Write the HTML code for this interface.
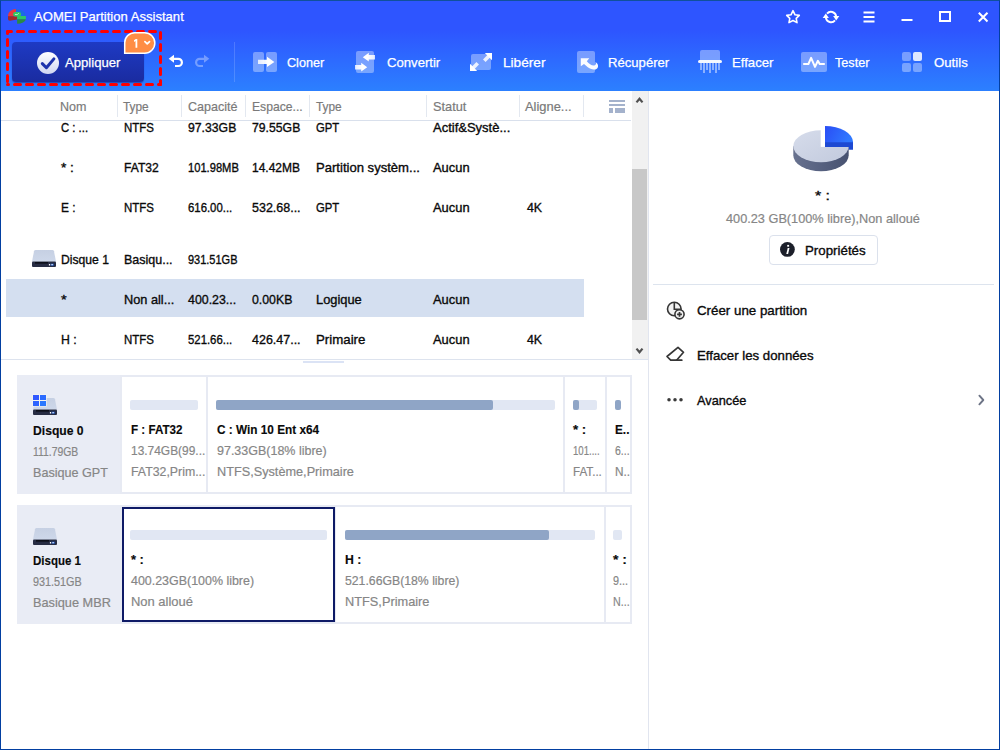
<!DOCTYPE html>
<html><head><meta charset="utf-8"><title>AOMEI Partition Assistant</title>
<style>
html,body{margin:0;padding:0;background:#fff;}
body{width:1000px;height:750px;overflow:hidden;font-family:"Liberation Sans",sans-serif;}
#win{position:relative;width:1000px;height:750px;overflow:hidden;background:#fff;}
.t{position:absolute;white-space:nowrap;line-height:16px;transform-origin:0 50%;font-family:"Liberation Sans",sans-serif;}
.a{position:absolute;}
#hdr{left:0;top:0;width:1000px;height:91px;background:linear-gradient(180deg,#2e55ff 0,#2e55ff 30px,#2c80ff 91px);}
#frame{left:0;top:0;width:998px;height:748px;border:1px solid #023fa1;border-top-color:#10509c;pointer-events:none;}
#apply{left:12px;top:42px;width:132px;height:40px;border-radius:4px;background:linear-gradient(180deg,#1e3ac4 0%,#1c33b2 50%,#1a2ba0 100%);box-shadow:0 1px 1px rgba(16,30,120,0.5);}
#dash{left:0;top:0;}
.vsep{width:1px;background:#e3e8f0;top:95px;height:22px;}
.pbox{box-sizing:border-box;border:2px solid #e7eaf3;background:#fff;}
.bar{height:10px;border-radius:2px;background:#e1e7f3;}
.fill{height:10px;border-radius:2px;background:#8fa5c6;}

</style></head>
<body>
<div id="win">
<div id="hdr" class="a"></div>
<!-- apply button -->
<div id="apply" class="a"></div>

<!-- table header -->
<div class="a vsep" style="left:117px"></div>
<div class="a vsep" style="left:181px"></div>
<div class="a vsep" style="left:245px"></div>
<div class="a vsep" style="left:309px"></div>
<div class="a vsep" style="left:426px"></div>
<div class="a vsep" style="left:519px"></div>
<div class="a vsep" style="left:583px"></div>
<div class="a" style="left:1px;top:120px;width:630px;height:1px;background:#d9e0ec"></div>
<!-- selected row -->
<div class="a" style="left:6px;top:279px;width:578px;height:38px;background:#d4dff0"></div>
<!-- scrollbar -->
<div class="a" style="left:632px;top:91px;width:16px;height:268px;background:#f1f1f1"></div>
<div class="a" style="left:632px;top:169px;width:15px;height:151px;background:#c8c8c8"></div>
<!-- dividers -->
<div class="a" style="left:1px;top:359px;width:648px;height:1px;background:#dde3ee"></div>
<div class="a" style="left:303px;top:361px;width:41px;height:2px;background:#dbe3f5"></div>
<div class="a" style="left:648px;top:91px;width:1px;height:658px;background:#e1e5ef"></div>
<div class="a" style="left:653px;top:284px;width:341px;height:1px;background:#dde4ee"></div>

<!-- disk 0 panel -->
<div class="a" style="left:17px;top:375px;width:614px;height:119px;background:#e9ecf5"></div>
<div class="a pbox" style="left:120px;top:375px;width:88px;height:119px"></div>
<div class="a pbox" style="left:206px;top:375px;width:359px;height:119px"></div>
<div class="a pbox" style="left:563px;top:375px;width:44px;height:119px"></div>
<div class="a pbox" style="left:605px;top:375px;width:27px;height:119px"></div>
<div class="a bar" style="left:130px;top:400px;width:68px"></div>
<div class="a bar" style="left:216px;top:400px;width:339px"></div>
<div class="a fill" style="left:216px;top:400px;width:277px"></div>
<div class="a bar" style="left:573px;top:400px;width:24px"></div>
<div class="a fill" style="left:573px;top:400px;width:6px"></div>
<div class="a fill" style="left:615px;top:400px;width:6px"></div>

<!-- disk 1 panel -->
<div class="a" style="left:17px;top:505px;width:614px;height:119px;background:#e9ecf5"></div>
<div class="a pbox" style="left:120px;top:505px;width:216px;height:119px"></div>
<div class="a pbox" style="left:334px;top:505px;width:272px;height:119px"></div>
<div class="a pbox" style="left:604px;top:505px;width:28px;height:119px"></div>
<div class="a" style="left:122px;top:507px;width:213px;height:115px;box-sizing:border-box;border:2px solid #0e1a66;background:#fff"></div>
<div class="a bar" style="left:130px;top:530px;width:197px"></div>
<div class="a bar" style="left:345px;top:530px;width:250px"></div>
<div class="a fill" style="left:345px;top:530px;width:204px"></div>
<div class="a bar" style="left:613px;top:530px;width:9px"></div>

<!-- properties button -->
<div class="a" style="left:769px;top:235px;width:109px;height:30px;box-sizing:border-box;border:1px solid #dbe1ec;border-radius:4px;background:#fff"></div>

<svg class="a" id="dash" width="1000" height="750" viewBox="0 0 1000 750">
  <defs>
    <linearGradient id="ck" x1="0" y1="0" x2="0" y2="1"><stop offset="0" stop-color="#ffffff"/><stop offset="1" stop-color="#cfd6f2"/></linearGradient>
    <linearGradient id="ar" x1="0" y1="0" x2="1" y2="0"><stop offset="0" stop-color="#fff" stop-opacity="0.800"/><stop offset="0.600" stop-color="#fff" stop-opacity="1"/></linearGradient>
    <linearGradient id="al" x1="1" y1="0" x2="0" y2="0"><stop offset="0" stop-color="#fff" stop-opacity="0.800"/><stop offset="0.600" stop-color="#fff" stop-opacity="1"/></linearGradient>
    <linearGradient id="dk" x1="0" y1="0" x2="0" y2="1"><stop offset="0" stop-color="#c6d0e3"/><stop offset="1" stop-color="#ced8ea"/></linearGradient>
  </defs>
  <!-- red dashed box -->
  <g fill="none" stroke="#ff0000" stroke-width="3" stroke-dasharray="6 6" stroke-linecap="round">
    <path d="M7.500 31.500 H160.500" stroke-dashoffset="2"/>
    <path d="M160.500 31.500 V84.500" stroke-dashoffset="11"/>
    <path d="M7.500 84.500 H160.500" stroke-dashoffset="5"/>
    <path d="M7.500 31.500 V84.500" stroke-dashoffset="4"/>
  </g>
  <!-- check icon -->
  <circle cx="48" cy="63" r="11" fill="url(#ck)"/>
  <path d="M42.300 63.600 L46.400 67.700 L53.900 58.900" fill="none" stroke="#1d33ac" stroke-width="3" stroke-linecap="round" stroke-linejoin="round"/>
  <!-- badge -->
  <path d="M124.700 53.200 V42.700 a10 10 0 0 1 10 -10 H144.600 a10.250 10.250 0 0 1 0 20.500 Z" fill="#ff8d45" stroke="#fff" stroke-width="1.500"/>
  <path d="M137.300 38.900 V47.800 H135.500 V41.100 L134 42 V40.300 L135.800 38.900 Z" fill="#fff"/>
  <path d="M144.900 41.600 L147.200 43.900 L149.500 41.600" fill="none" stroke="#fff" stroke-width="1.700" stroke-linecap="round" stroke-linejoin="round"/>
  <!-- undo -->
  <path d="M173.600 58.800 H178.300 a3.600 3.600 0 0 1 0 7.200 H175" fill="none" stroke="#fff" stroke-width="2.200"/>
  <path d="M168.700 58.800 L174 54.800 V62.800 Z" fill="#fff"/>
  <!-- redo -->
  <g opacity="0.340">
  <path d="M204.400 58.800 H199.700 a3.600 3.600 0 0 0 0 7.200 H203" fill="none" stroke="#fff" stroke-width="2.200"/>
  <path d="M209.300 58.800 L204 54.800 V62.800 Z" fill="#fff"/>
  </g>
  <!-- toolbar separator -->
  <rect x="234" y="42" width="1" height="40" fill="#fff" opacity="0.16"/>

  <!-- Cloner -->
  <rect x="253" y="52" width="11" height="20" rx="2" fill="#fff" opacity="0.36"/>
  <rect x="266" y="52" width="11" height="20" rx="2" fill="#fff" opacity="0.36"/>
  <path d="M258 59.700 H267 V56.700 L274.400 61.900 L267 67.100 V64.100 H258 Z" fill="url(#ar)"/>
  <!-- Convertir -->
  <rect x="356" y="51" width="18" height="22" rx="2" fill="#fff" opacity="0.36"/>
  <path d="M375 55 H368.800 V52.800 L362.800 57.200 L368.800 61.600 V59.400 H375 Z" fill="url(#al)"/>
  <path d="M355 65 H361.200 V62.800 L367.200 67.200 L361.200 71.600 V69.400 H355 Z" fill="url(#ar)"/>
  <!-- Liberer -->
  <rect x="471" y="54" width="20" height="16" rx="2" fill="#fff" opacity="0.36"/>
  <path d="M487.900 54.500 L490.500 57.100 L485.600 62 L483 59.400 Z" fill="#fff" opacity="0.860"/><path d="M484.800 53 H492 V60.200 Z" fill="#fff"/>
  <path d="M471.500 66.900 L474.100 69.500 L479 64.600 L476.400 62 Z" fill="#fff" opacity="0.860"/><path d="M470 63.800 V71 H477.200 Z" fill="#fff"/>
  <!-- Recuperer -->
  <rect x="577" y="51" width="18" height="22" rx="2" fill="#fff" opacity="0.36"/>
  <path d="M580.800 58.200 H589.300 L586.800 61.200 C589 63.600 591.500 65.700 594 65.500 C595.600 65.300 596.100 63.600 595.500 61.900 C598.200 63.500 598.900 66.500 597.100 68.400 C594.600 70.600 590.500 69.400 587.500 67.100 C586 65.900 584.800 64.900 584 64.100 L580.800 66.300 Z" fill="#fff" opacity="0.97"/>
  <!-- Effacer -->
  <path d="M700 60 V52 a2 2 0 0 1 2 -2 H718 a2 2 0 0 1 2 2 V60 Z" fill="#fff" opacity="0.36"/>
  <rect x="698" y="60" width="24" height="3" rx="1.5" fill="#fff" opacity="0.950"/>
  <g fill="#fff" opacity="0.45">
    <rect x="700" y="63" width="2" height="7"/>
    <rect x="703" y="63" width="2" height="10"/>
    <rect x="706" y="63" width="2" height="7"/>
    <rect x="709" y="63" width="2" height="10"/>
    <rect x="712" y="63" width="2" height="7"/>
    <rect x="715" y="63" width="2" height="10"/>
    <rect x="718" y="63" width="2" height="7"/>
  </g>
  <!-- Tester -->
  <rect x="801" y="52" width="26" height="20" rx="2" fill="#fff" opacity="0.36"/>
  <path d="M803.200 64 H808.400 L811.100 57.800 L815 66.900 L817.900 60.800 L819.700 64 H824.800" fill="none" stroke="#fff" stroke-width="2" stroke-linejoin="round" stroke-linecap="butt"/>
  <!-- Outils -->
  <rect x="902" y="52" width="9" height="9" rx="2" fill="#fff" opacity="0.36"/>
  <rect x="913" y="52" width="9" height="9" rx="2" fill="#fff" opacity="0.85"/>
  <rect x="902" y="63" width="9" height="9" rx="2" fill="#fff" opacity="0.36"/>
  <rect x="913" y="63" width="9" height="9" rx="2" fill="#fff" opacity="0.36"/>

  <!-- window controls -->
  <g fill="none" stroke="#fff" stroke-width="1.8" stroke-linejoin="round" stroke-linecap="round">
    <path d="M793 10.700 L795 14.800 L799.300 15.400 L796.200 18.400 L797 22.600 L793 20.500 L789 22.600 L789.800 18.400 L786.700 15.400 L791 14.800 Z" stroke-width="1.600"/>
    <path d="M863.500 12.500 H874.5 M863.500 17 H874.5 M863.500 21.500 H874.500" stroke-linecap="butt" stroke-width="2"/>
    <path d="M901.500 20 H912.500" stroke-linecap="butt" stroke-width="2"/>
    <rect x="940" y="12" width="10" height="9" stroke-width="2" stroke-linejoin="miter"/>
    <path d="M978.800 12.800 L987.500 21.500 M987.500 12.800 L978.800 21.500" stroke-width="2" stroke-linecap="butt"/>
  </g>
  <!-- refresh -->
  <g fill="none" stroke="#fff" stroke-width="1.900">
    <path d="M827 13.660 A5.200 5.200 0 0 1 836.100 16.100"/>
    <path d="M835 20.340 A5.200 5.200 0 0 1 825.900 17.900"/>
  </g>
  <path d="M833.100 16 H839.300 L836.200 20.400 Z" fill="#fff"/>
  <path d="M822.700 18 H828.900 L825.800 13.600 Z" fill="#fff"/>

  <!-- app icon -->
  <g>
    <path d="M8 16.300 V15.500 A8.500 6.600 0 0 1 16 9 V16.300 Z" fill="#e8383f"/>
    <path d="M16 9 A9.600 6.800 0 0 1 25.900 15.800 H16 Z" fill="#1a6ce2"/>
    <path d="M8 16.200 H17.100 V19.400 L10 20.800 Q8 20.800 8 19 Z" fill="#a52a27"/>
    <path d="M17.100 16 H25.900 V19.400 H17.100 Z" fill="#2ec866"/>
    <path d="M17.100 19.300 H25.900 A9 5 0 0 1 17.100 23.800 Z" fill="#2a8a45"/>
    <rect x="13.100" y="12" width="7.900" height="4.400" rx="2" fill="#2ecc62"/>
    <path d="M15.300 14.500 L17.300 14.600 L18.500 13.500" fill="none" stroke="#d9f5e2" stroke-width="0.800" stroke-linecap="round"/>
  </g>

  <!-- column chooser icon -->
  <g fill="#a4b2cc">
    <rect x="609" y="100" width="16" height="2"/>
    <rect x="609" y="104" width="16" height="2"/>
    <rect x="609" y="108" width="4" height="5"/>
    <rect x="615" y="108" width="10" height="5"/>
  </g>
  <!-- scrollbar arrows -->
  <path d="M636.500 102.400 L639.500 98.800 L642.500 102.400" fill="none" stroke="#505050" stroke-width="2.200"/>
  <path d="M636.500 348.600 L639.500 352.200 L642.500 348.600" fill="none" stroke="#505050" stroke-width="2.200"/>

  <!-- disk icons -->
  <symbol id="hdd" viewBox="0 0 24 17" overflow="visible">
    <path d="M3.6 0 H20.4 Q21.7 0 22 1.200 L24 11.800 H0 L2 1.200 Q2.300 0 3.600 0 Z" fill="url(#dk)"/>
    <rect x="0" y="11.400" width="24" height="5.500" rx="1" fill="#272c43"/>
    <rect x="3" y="12.100" width="13" height="1.500" fill="#0b0d16"/>
    <rect x="16.900" y="14" width="1.300" height="1.500" fill="#fff"/>
    <rect x="18.700" y="13.700" width="3" height="2" fill="#1d59c8"/>
    <rect x="19.300" y="14.300" width="1.800" height="0.900" fill="#fff"/>
  </symbol>
  <use href="#hdd" x="32" y="250" width="24" height="17"/>
  <use href="#hdd" x="33" y="398" width="24" height="17"/>
  <rect x="32.400" y="394.200" width="14.200" height="12.300" fill="#f4f4f0"/>
  <rect x="33" y="395" width="6" height="5" fill="#3159ff"/><rect x="40" y="395" width="6" height="5" fill="#2b6bff"/>
  <rect x="33" y="401" width="6" height="5" fill="#2d63ff"/><rect x="40" y="401" width="6" height="5" fill="#2a78ff"/>
  <use href="#hdd" x="33" y="528" width="24" height="17"/>

  <!-- pie -->
  <defs>
    <linearGradient id="ps" x1="0" y1="0" x2="1" y2="0"><stop offset="0" stop-color="#68728f"/><stop offset="0.5" stop-color="#566180"/><stop offset="1" stop-color="#475270"/></linearGradient>
    <linearGradient id="pt" x1="0" y1="0" x2="1" y2="1"><stop offset="0" stop-color="#d6dceb"/><stop offset="1" stop-color="#c2cadd"/></linearGradient>
    <linearGradient id="pb" x1="0" y1="0" x2="1" y2="0.300"><stop offset="0" stop-color="#2a4df5"/><stop offset="1" stop-color="#2f78ff"/></linearGradient>
  </defs>
  <g>
    <path d="M793.300 146 V155.300 A27.700 16 0 0 0 848.700 155.300 V146 Z" fill="url(#ps)"/>
    <ellipse cx="821" cy="146.200" rx="27.700" ry="16" fill="url(#pt)"/>
    <path d="M820.700 127 V146.900 H851 V127 Z" fill="#fff"/>
    <path d="M825 141.500 H853 V149.700 H848.800 V146.900 H825 Z" fill="#1d49d2"/>
    <path d="M825 142.200 V126 A28 16.200 0 0 1 853 142.200 Z" fill="url(#pb)"/>
  </g>

  <!-- properties info icon -->
  <circle cx="787.400" cy="249.400" r="7.400" fill="#1c1f2a"/>
  <path d="M787.700 248 H789.500 L788.100 253.900 H786.300 Z" fill="#fff"/><rect x="787.200" y="244.900" width="1.900" height="1.800" fill="#fff"/>

  <!-- create partition icon -->
  <g fill="none" stroke="#353535" stroke-width="1.600">
    <circle cx="674.300" cy="309" r="6.800" fill="#f2f2f2"/>
    <path d="M674.300 302.200 V309.200 H681.100" />
    <circle cx="679.500" cy="314.300" r="4.600" fill="#f2f2f2"/>
    <path d="M679.500 311.900 V316.700 M677.100 314.300 H681.900" stroke-width="1.700"/>
  </g>
  <!-- eraser icon -->
  <g fill="none" stroke="#353535" stroke-width="1.700" stroke-linejoin="round" stroke-linecap="round">
    <path d="M678 347.400 L683.500 352.300 L676.600 360.200 H670.700 L667 356.500 Z"/>
    <path d="M676.600 360.200 H681.800"/>
  </g>
  <!-- dots -->
  <circle cx="669" cy="399.800" r="1.750" fill="#3a3a3a"/><circle cx="675" cy="399.800" r="1.750" fill="#3a3a3a"/><circle cx="681" cy="399.800" r="1.750" fill="#3a3a3a"/>
  <!-- chevron -->
  <path d="M979.400 395.700 L983.300 400 L979.400 404.300" fill="none" stroke="#6d7486" stroke-width="1.900" stroke-linecap="round" stroke-linejoin="round"/>
</svg>
<div id="frame" class="a"></div>

<span class="t" style="left:33.60px;top:9px;color:#fff;font-size:13.5px;font-weight:400;-webkit-text-stroke:0.25px;transform:scaleX(0.9690);">AOMEI Partition Assistant</span>
<span class="t" style="left:64.50px;top:55px;color:#fff;font-size:13px;font-weight:400;-webkit-text-stroke:0.25px;transform:scaleX(1.0091);">Appliquer</span>
<span class="t" style="left:286.60px;top:55px;color:#fff;font-size:13px;font-weight:400;-webkit-text-stroke:0.25px;transform:scaleX(0.9718);">Cloner</span>
<span class="t" style="left:386.50px;top:55px;color:#fff;font-size:13px;font-weight:400;-webkit-text-stroke:0.25px;transform:scaleX(1.0094);">Convertir</span>
<span class="t" style="left:502.50px;top:55px;color:#fff;font-size:13px;font-weight:400;-webkit-text-stroke:0.25px;transform:scaleX(1.0488);">Libérer</span>
<span class="t" style="left:608.00px;top:55px;color:#fff;font-size:13px;font-weight:400;-webkit-text-stroke:0.25px;transform:scaleX(1.0082);">Récupérer</span>
<span class="t" style="left:731.50px;top:55px;color:#fff;font-size:13px;font-weight:400;-webkit-text-stroke:0.25px;transform:scaleX(1.0122);">Effacer</span>
<span class="t" style="left:835.00px;top:55px;color:#fff;font-size:13px;font-weight:400;-webkit-text-stroke:0.25px;transform:scaleX(0.9722);">Tester</span>
<span class="t" style="left:933.50px;top:55px;color:#fff;font-size:13px;font-weight:400;-webkit-text-stroke:0.25px;transform:scaleX(1.0152);">Outils</span>
<span class="t" style="left:60.40px;top:99px;color:#7a7a7a;font-size:13px;font-weight:400;-webkit-text-stroke:0.2px;transform:scaleX(0.9630);">Nom</span>
<span class="t" style="left:122.50px;top:99px;color:#7a7a7a;font-size:13px;font-weight:400;-webkit-text-stroke:0.2px;transform:scaleX(0.9107);">Type</span>
<span class="t" style="left:187.50px;top:99px;color:#7a7a7a;font-size:13px;font-weight:400;-webkit-text-stroke:0.2px;transform:scaleX(0.9627);">Capacité</span>
<span class="t" style="left:251.50px;top:99px;color:#7a7a7a;font-size:13px;font-weight:400;-webkit-text-stroke:0.2px;transform:scaleX(0.9352);">Espace...</span>
<span class="t" style="left:316.00px;top:99px;color:#7a7a7a;font-size:13px;font-weight:400;-webkit-text-stroke:0.2px;transform:scaleX(0.9107);">Type</span>
<span class="t" style="left:432.60px;top:99px;color:#7a7a7a;font-size:13px;font-weight:400;-webkit-text-stroke:0.2px;transform:scaleX(0.9824);">Statut</span>
<span class="t" style="left:525.40px;top:99px;color:#7a7a7a;font-size:13px;font-weight:400;-webkit-text-stroke:0.2px;transform:scaleX(0.9913);">Aligne...</span>
<span class="t" style="left:61.40px;top:120px;color:#0a0a0a;font-size:13px;font-weight:400;-webkit-text-stroke:0.35px;transform:scaleX(0.8710);">C : ...</span>
<span class="t" style="left:124.00px;top:120px;color:#0a0a0a;font-size:13px;font-weight:400;-webkit-text-stroke:0.35px;transform:scaleX(0.8824);">NTFS</span>
<span class="t" style="left:188.00px;top:120px;color:#0a0a0a;font-size:13px;font-weight:400;-webkit-text-stroke:0.35px;transform:scaleX(0.9412);">97.33GB</span>
<span class="t" style="left:252.00px;top:120px;color:#0a0a0a;font-size:13px;font-weight:400;-webkit-text-stroke:0.35px;transform:scaleX(0.9412);">79.55GB</span>
<span class="t" style="left:316.00px;top:120px;color:#0a0a0a;font-size:13px;font-weight:400;-webkit-text-stroke:0.35px;transform:scaleX(0.8667);">GPT</span>
<span class="t" style="left:433.00px;top:120px;color:#0a0a0a;font-size:13px;font-weight:400;-webkit-text-stroke:0.35px;transform:scaleX(1.0000);">Actif&amp;Systè...</span>
<span class="t" style="left:61.40px;top:160px;color:#0a0a0a;font-size:13px;font-weight:400;-webkit-text-stroke:0.35px;transform:scaleX(1.0500);">* :</span>
<span class="t" style="left:124.00px;top:160px;color:#0a0a0a;font-size:13px;font-weight:400;-webkit-text-stroke:0.35px;transform:scaleX(0.9297);">FAT32</span>
<span class="t" style="left:188.00px;top:160px;color:#0a0a0a;font-size:13px;font-weight:400;-webkit-text-stroke:0.35px;transform:scaleX(0.8576);">101.98MB</span>
<span class="t" style="left:252.00px;top:160px;color:#0a0a0a;font-size:13px;font-weight:400;-webkit-text-stroke:0.35px;transform:scaleX(0.9231);">14.42MB</span>
<span class="t" style="left:316.00px;top:160px;color:#0a0a0a;font-size:13px;font-weight:400;-webkit-text-stroke:0.35px;transform:scaleX(1.0058);">Partition systèm...</span>
<span class="t" style="left:433.00px;top:160px;color:#0a0a0a;font-size:13px;font-weight:400;-webkit-text-stroke:0.35px;transform:scaleX(0.9919);">Aucun</span>
<span class="t" style="left:61.40px;top:200px;color:#0a0a0a;font-size:13px;font-weight:400;-webkit-text-stroke:0.35px;transform:scaleX(0.9125);">E :</span>
<span class="t" style="left:124.00px;top:200px;color:#0a0a0a;font-size:13px;font-weight:400;-webkit-text-stroke:0.35px;transform:scaleX(0.8824);">NTFS</span>
<span class="t" style="left:188.00px;top:200px;color:#0a0a0a;font-size:13px;font-weight:400;-webkit-text-stroke:0.35px;transform:scaleX(0.8740);">616.00...</span>
<span class="t" style="left:252.00px;top:200px;color:#0a0a0a;font-size:13px;font-weight:400;-webkit-text-stroke:0.35px;transform:scaleX(0.9600);">532.68...</span>
<span class="t" style="left:316.00px;top:200px;color:#0a0a0a;font-size:13px;font-weight:400;-webkit-text-stroke:0.35px;transform:scaleX(0.8667);">GPT</span>
<span class="t" style="left:433.00px;top:200px;color:#0a0a0a;font-size:13px;font-weight:400;-webkit-text-stroke:0.35px;transform:scaleX(0.9919);">Aucun</span>
<span class="t" style="left:526.80px;top:200px;color:#0a0a0a;font-size:13px;font-weight:400;-webkit-text-stroke:0.35px;transform:scaleX(0.9500);">4K</span>
<span class="t" style="left:61.40px;top:252px;color:#0a0a0a;font-size:13px;font-weight:400;-webkit-text-stroke:0.35px;transform:scaleX(0.9333);">Disque 1</span>
<span class="t" style="left:124.00px;top:252px;color:#0a0a0a;font-size:13px;font-weight:400;-webkit-text-stroke:0.35px;transform:scaleX(0.9600);">Basiqu...</span>
<span class="t" style="left:188.00px;top:252px;color:#0a0a0a;font-size:13px;font-weight:400;-webkit-text-stroke:0.35px;transform:scaleX(0.8448);">931.51GB</span>
<span class="t" style="left:61.40px;top:292px;color:#0a0a0a;font-size:13px;font-weight:400;-webkit-text-stroke:0.35px;transform:scaleX(1.1200);">*</span>
<span class="t" style="left:124.00px;top:292px;color:#0a0a0a;font-size:13px;font-weight:400;-webkit-text-stroke:0.35px;transform:scaleX(0.9804);">Non all...</span>
<span class="t" style="left:188.00px;top:292px;color:#0a0a0a;font-size:13px;font-weight:400;-webkit-text-stroke:0.35px;transform:scaleX(0.9520);">400.23...</span>
<span class="t" style="left:252.00px;top:292px;color:#0a0a0a;font-size:13px;font-weight:400;-webkit-text-stroke:0.35px;transform:scaleX(0.9465);">0.00KB</span>
<span class="t" style="left:316.00px;top:292px;color:#0a0a0a;font-size:13px;font-weight:400;-webkit-text-stroke:0.35px;transform:scaleX(0.9891);">Logique</span>
<span class="t" style="left:433.00px;top:292px;color:#0a0a0a;font-size:13px;font-weight:400;-webkit-text-stroke:0.35px;transform:scaleX(0.9919);">Aucun</span>
<span class="t" style="left:61.40px;top:332px;color:#0a0a0a;font-size:13px;font-weight:400;-webkit-text-stroke:0.35px;transform:scaleX(0.9438);">H :</span>
<span class="t" style="left:124.00px;top:332px;color:#0a0a0a;font-size:13px;font-weight:400;-webkit-text-stroke:0.35px;transform:scaleX(0.8824);">NTFS</span>
<span class="t" style="left:188.00px;top:332px;color:#0a0a0a;font-size:13px;font-weight:400;-webkit-text-stroke:0.35px;transform:scaleX(0.8740);">521.66...</span>
<span class="t" style="left:252.00px;top:332px;color:#0a0a0a;font-size:13px;font-weight:400;-webkit-text-stroke:0.35px;transform:scaleX(0.9600);">426.47...</span>
<span class="t" style="left:316.00px;top:332px;color:#0a0a0a;font-size:13px;font-weight:400;-webkit-text-stroke:0.35px;transform:scaleX(1.0204);">Primaire</span>
<span class="t" style="left:433.00px;top:332px;color:#0a0a0a;font-size:13px;font-weight:400;-webkit-text-stroke:0.35px;transform:scaleX(0.9919);">Aucun</span>
<span class="t" style="left:526.80px;top:332px;color:#0a0a0a;font-size:13px;font-weight:400;-webkit-text-stroke:0.35px;transform:scaleX(0.9500);">4K</span>
<span class="t" style="left:33.40px;top:423px;color:#0a0a0a;font-size:13px;font-weight:700;-webkit-text-stroke:0.15px;transform:scaleX(0.9333);">Disque 0</span>
<span class="t" style="left:33.40px;top:444px;color:#868686;font-size:13px;font-weight:400;-webkit-text-stroke:0.2px;transform:scaleX(0.8000);">111.79GB</span>
<span class="t" style="left:33.40px;top:465px;color:#868686;font-size:13px;font-weight:400;-webkit-text-stroke:0.2px;transform:scaleX(0.9688);">Basique GPT</span>
<span class="t" style="left:130.60px;top:422px;color:#0a0a0a;font-size:13px;font-weight:700;-webkit-text-stroke:0.15px;transform:scaleX(0.8948);">F : FAT32</span>
<span class="t" style="left:130.60px;top:443px;color:#868686;font-size:13px;font-weight:400;-webkit-text-stroke:0.2px;transform:scaleX(0.9175);">13.74GB(99...</span>
<span class="t" style="left:130.60px;top:464px;color:#868686;font-size:13px;font-weight:400;-webkit-text-stroke:0.2px;transform:scaleX(0.9487);">FAT32,Prim...</span>
<span class="t" style="left:216.50px;top:422px;color:#0a0a0a;font-size:13px;font-weight:700;-webkit-text-stroke:0.15px;transform:scaleX(0.9071);">C : Win 10 Ent x64</span>
<span class="t" style="left:216.50px;top:443px;color:#868686;font-size:13px;font-weight:400;-webkit-text-stroke:0.2px;transform:scaleX(0.9605);">97.33GB(18% libre)</span>
<span class="t" style="left:216.50px;top:464px;color:#868686;font-size:13px;font-weight:400;-webkit-text-stroke:0.2px;transform:scaleX(0.9771);">NTFS,Système,Primaire</span>
<span class="t" style="left:573.00px;top:422px;color:#0a0a0a;font-size:13px;font-weight:700;-webkit-text-stroke:0.15px;transform:scaleX(1.0231);">* :</span>
<span class="t" style="left:573.00px;top:443px;color:#868686;font-size:13px;font-weight:400;-webkit-text-stroke:0.2px;transform:scaleX(0.7389);">101....</span>
<span class="t" style="left:573.00px;top:464px;color:#868686;font-size:13px;font-weight:400;-webkit-text-stroke:0.2px;transform:scaleX(0.8938);">FAT...</span>
<span class="t" style="left:615.00px;top:422px;color:#0a0a0a;font-size:13px;font-weight:700;-webkit-text-stroke:0.15px;transform:scaleX(0.9062);">E..</span>
<span class="t" style="left:615.00px;top:443px;color:#868686;font-size:13px;font-weight:400;-webkit-text-stroke:0.2px;transform:scaleX(0.8056);">6...</span>
<span class="t" style="left:615.00px;top:464px;color:#868686;font-size:13px;font-weight:400;-webkit-text-stroke:0.2px;transform:scaleX(0.9062);">N..</span>
<span class="t" style="left:33.40px;top:553px;color:#0a0a0a;font-size:13px;font-weight:700;-webkit-text-stroke:0.15px;transform:scaleX(0.8852);">Disque 1</span>
<span class="t" style="left:33.40px;top:574px;color:#868686;font-size:13px;font-weight:400;-webkit-text-stroke:0.2px;transform:scaleX(0.8328);">931.51GB</span>
<span class="t" style="left:33.40px;top:595px;color:#868686;font-size:13px;font-weight:400;-webkit-text-stroke:0.2px;transform:scaleX(0.9797);">Basique MBR</span>
<span class="t" style="left:130.60px;top:552px;color:#0a0a0a;font-size:13px;font-weight:700;-webkit-text-stroke:0.15px;transform:scaleX(0.9923);">* :</span>
<span class="t" style="left:130.60px;top:573px;color:#868686;font-size:13px;font-weight:400;-webkit-text-stroke:0.2px;transform:scaleX(0.9566);">400.23GB(100% libre)</span>
<span class="t" style="left:130.60px;top:594px;color:#868686;font-size:13px;font-weight:400;-webkit-text-stroke:0.2px;transform:scaleX(0.9968);">Non alloué</span>
<span class="t" style="left:345.00px;top:552px;color:#0a0a0a;font-size:13px;font-weight:700;-webkit-text-stroke:0.15px;transform:scaleX(0.9412);">H :</span>
<span class="t" style="left:345.00px;top:573px;color:#868686;font-size:13px;font-weight:400;-webkit-text-stroke:0.2px;transform:scaleX(0.9421);">521.66GB(18% libre)</span>
<span class="t" style="left:345.00px;top:594px;color:#868686;font-size:13px;font-weight:400;-webkit-text-stroke:0.2px;transform:scaleX(0.9826);">NTFS,Primaire</span>
<span class="t" style="left:613.00px;top:552px;color:#0a0a0a;font-size:13px;font-weight:700;-webkit-text-stroke:0.15px;transform:scaleX(1.0769);">* :</span>
<span class="t" style="left:613.00px;top:573px;color:#868686;font-size:13px;font-weight:400;-webkit-text-stroke:0.2px;transform:scaleX(0.8333);">9...</span>
<span class="t" style="left:613.00px;top:594px;color:#868686;font-size:13px;font-weight:400;-webkit-text-stroke:0.2px;transform:scaleX(0.8250);">N...</span>
<span class="t" style="left:814.50px;top:188px;color:#0a0a0a;font-size:13px;font-weight:400;-webkit-text-stroke:0.35px;transform:scaleX(1.2250);">* :</span>
<span class="t" style="left:726.30px;top:211px;color:#868686;font-size:13px;font-weight:400;-webkit-text-stroke:0.2px;transform:scaleX(0.9793);">400.23 GB(100% libre),Non alloué</span>
<span class="t" style="left:805.00px;top:243px;color:#0a0a0a;font-size:13px;font-weight:400;-webkit-text-stroke:0.35px;transform:scaleX(1.0233);">Propriétés</span>
<span class="t" style="left:697.30px;top:303px;color:#0a0a0a;font-size:13px;font-weight:400;-webkit-text-stroke:0.35px;transform:scaleX(1.0241);">Créer une partition</span>
<span class="t" style="left:697.30px;top:348px;color:#0a0a0a;font-size:13px;font-weight:400;-webkit-text-stroke:0.35px;transform:scaleX(1.0165);">Effacer les données</span>
<span class="t" style="left:697.30px;top:393px;color:#0a0a0a;font-size:13px;font-weight:400;-webkit-text-stroke:0.35px;transform:scaleX(0.9804);">Avancée</span>
</div>
</body></html>
